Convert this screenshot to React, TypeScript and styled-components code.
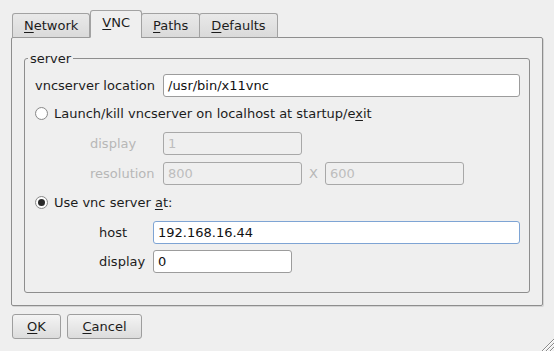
import * as React from "react";
import styled, { createGlobalStyle } from "styled-components";

const GlobalStyle = createGlobalStyle`
  html, body {
    margin: 0;
    padding: 0;
    background: #efefef;
  }
  body {
    font-family: "DejaVu Sans", "Liberation Sans", sans-serif;
    font-size: 13px;
    color: #1c1c1c;
  }
`;

const Window = styled.div`
  position: relative;
  width: 554px;
  height: 351px;
  box-sizing: border-box;
  padding: 11px 11px 0 11px;
  background: #efefef;
  display: flex;
  flex-direction: column;
`;

const TabBar = styled.div`
  display: flex;
  align-items: flex-end;
  height: 27px;
  padding-left: 1px;
  margin-bottom: -1px;
  position: relative;
  z-index: 1;
`;

const Tab = styled.div<{ $active?: boolean }>`
  box-sizing: border-box;
  height: ${(p) => (p.$active ? "28px" : "25px")};
  padding: 0 11px;
  display: flex;
  align-items: center;
  border: 1px solid #a2a2a2;
  border-bottom-color: ${(p) => (p.$active ? "#efefef" : "#9a9a9a")};
  border-radius: 3px 3px 0 0;
  margin-left: ${(p) => (p.$active ? "0" : "-1px")};
  background: ${(p) =>
    p.$active ? "#efefef" : "linear-gradient(#e9e9e9, #dadada)"};
  padding-bottom: ${(p) => (p.$active ? "3px" : "0")};
  &:first-child {
    margin-left: 0;
  }
`;

const U = styled.span`
  text-decoration: underline;
  text-underline-offset: 2px;
`;

const Panel = styled.div`
  box-sizing: border-box;
  border: 1px solid #8e8e8e;
  border-radius: 2px;
  box-shadow: 1px 1px 0 #d4d4d4;
  padding: 13px 12px 12px 12px;
`;

const GroupBox = styled.fieldset`
  margin: 0;
  min-inline-size: 0;
  border: 1px solid #8e8e8e;
  border-radius: 3px;
  padding: 0 9px 19px 10px;
  display: flex;
  flex-direction: column;
`;

const Legend = styled.legend`
  padding: 0 2px;
  margin-left: -7px;
  line-height: 15px;
`;

const Row = styled.div<{ $top: number; $indent?: number; $cols: string }>`
  display: grid;
  grid-template-columns: ${(p) => p.$cols};
  align-items: center;
  margin-top: ${(p) => p.$top}px;
  padding-left: ${(p) => p.$indent ?? 0}px;
`;

const Label = styled.span<{ $disabled?: boolean }>`
  color: ${(p) => (p.$disabled ? "#b7b7b7" : "#1c1c1c")};
  white-space: nowrap;
`;

const Cross = styled.span`
  color: #b7b7b7;
  text-align: center;
`;

const Field = styled.div<{ $disabled?: boolean; $focus?: boolean }>`
  box-sizing: border-box;
  height: 23px;
  display: flex;
  align-items: center;
  padding-left: 4px;
  border: 1px solid
    ${(p) => (p.$focus ? "#7ea4d4" : p.$disabled ? "#a8a8a8" : "#9c9c9c")};
  border-radius: 3px;
  background: ${(p) => (p.$disabled ? "#efefef" : "#ffffff")};
  color: ${(p) => (p.$disabled ? "#bdbdbd" : "#111")};
  white-space: nowrap;
  overflow: hidden;
`;

const RadioRow = styled.label<{ $top: number }>`
  display: flex;
  align-items: center;
  gap: 6px;
  height: 20px;
  margin-top: ${(p) => p.$top}px;
`;

const RadioCircle = styled.span<{ $checked?: boolean }>`
  box-sizing: border-box;
  width: 13px;
  height: 13px;
  border-radius: 50%;
  border: 1px solid #8a8a8a;
  background: radial-gradient(circle, #ffffff 55%, #ececec);
  display: flex;
  align-items: center;
  justify-content: center;
  &::after {
    content: "";
    display: ${(p) => (p.$checked ? "block" : "none")};
    width: 7px;
    height: 7px;
    border-radius: 50%;
    background: #2a2a2a;
  }
`;

const ButtonRow = styled.div`
  display: flex;
  gap: 6px;
  margin-top: 8px;
  padding-left: 1px;
`;

const Button = styled.button<{ $w: number }>`
  box-sizing: border-box;
  width: ${(p) => p.$w}px;
  height: 25px;
  font: inherit;
  color: #1c1c1c;
  border: 1px solid #9e9e9e;
  border-radius: 3px;
  background: linear-gradient(#f4f4f4, #dcdcdc);
  padding: 0;
`;

const Grip = styled.svg`
  position: absolute;
  right: 0;
  bottom: 0;
`;

export default function App(): JSX.Element {
  return (
    <>
      <GlobalStyle />
      <Window>
        <TabBar>
          <Tab>
            <span>
              <U>N</U>etwork
            </span>
          </Tab>
          <Tab $active>
            <span>
              <U>V</U>NC
            </span>
          </Tab>
          <Tab>
            <span>
              <U>P</U>aths
            </span>
          </Tab>
          <Tab>
            <span>
              <U>D</U>efaults
            </span>
          </Tab>
        </TabBar>
        <Panel>
          <GroupBox>
            <Legend>server</Legend>
            <Row $top={8} $cols="128px 1fr">
              <Label>vncserver location</Label>
              <Field>/usr/bin/x11vnc</Field>
            </Row>
            <RadioRow $top={6}>
              <RadioCircle />
              <span>
                Launch/kill vncserver on localhost at startup/e<U>x</U>it
              </span>
            </RadioRow>
            <Row $top={9} $indent={55} $cols="73px 139px">
              <Label $disabled>display</Label>
              <Field $disabled>1</Field>
            </Row>
            <Row $top={7} $indent={55} $cols="73px 139px 23px 139px">
              <Label $disabled>resolution</Label>
              <Field $disabled>800</Field>
              <Cross>X</Cross>
              <Field $disabled>600</Field>
            </Row>
            <RadioRow $top={7}>
              <RadioCircle $checked />
              <span>
                Use vnc server <U>a</U>t:
              </span>
            </RadioRow>
            <Row $top={9} $indent={64} $cols="54px 1fr">
              <Label>host</Label>
              <Field $focus>192.168.16.44</Field>
            </Row>
            <Row $top={6} $indent={64} $cols="54px 139px">
              <Label>display</Label>
              <Field>0</Field>
            </Row>
          </GroupBox>
        </Panel>
        <ButtonRow>
          <Button $w={49}>
            <U>O</U>K
          </Button>
          <Button $w={75}>
            <U>C</U>ancel
          </Button>
        </ButtonRow>
        <Grip width="14" height="14" viewBox="0 0 14 14">
          <g stroke="#8a8a8a" strokeWidth="1">
            <line x1="14" y1="2" x2="2" y2="14" />
            <line x1="14" y1="6" x2="6" y2="14" />
            <line x1="14" y1="10" x2="10" y2="14" />
          </g>
          <g stroke="#ffffff" strokeWidth="1">
            <line x1="14" y1="3" x2="3" y2="14" />
            <line x1="14" y1="7" x2="7" y2="14" />
            <line x1="14" y1="11" x2="11" y2="14" />
          </g>
        </Grip>
      </Window>
    </>
  );
}
